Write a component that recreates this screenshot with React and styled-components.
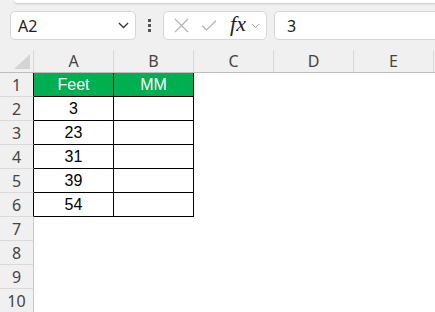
import React from 'react'
import styled, { createGlobalStyle } from 'styled-components'

const GlobalStyle = createGlobalStyle`
  body {
    margin: 0;
    background: #f0f0f0;
    font-family: "Noto Sans", "Liberation Sans", sans-serif;
    overflow: hidden;
  }
`

const Page = styled.div`
  width: 435px;
  height: 312px;
  overflow: hidden;
`

const RibbonEdge = styled.div`
  height: 3px;
  margin-left: 14px;
  background: #fff;
  border-bottom-left-radius: 6px;
  box-shadow: 0 1px 2px rgba(0, 0, 0, 0.18);
`

const Toolbar = styled.div`
  display: flex;
  align-items: flex-start;
  height: 47px;
  box-sizing: border-box;
  padding: 8px 0 0 10px;
`

const Box = styled.div`
  height: 29px;
  box-sizing: border-box;
  background: #fff;
  border: 1px solid #d6d6d6;
  border-radius: 5px;
  display: flex;
  align-items: center;
  flex: none;
`

const NameBox = styled(Box)`
  width: 126px;
  padding: 0 6px 0 7px;
  justify-content: space-between;
  font-size: 16px;
  color: #222;
`

const Dots = styled.div`
  width: 27px;
  height: 29px;
  display: flex;
  flex-direction: column;
  align-items: center;
  justify-content: center;
  gap: 2px;
  flex: none;

  span {
    width: 3px;
    height: 3px;
    background: #555;
  }
`

const FxBox = styled(Box)`
  width: 104px;
  padding: 0 0 0 6px;
`

const IconSlot = styled.div`
  width: ${p => p.$w}px;
  display: flex;
  align-items: center;
  justify-content: center;
  flex: none;
`

const Fx = styled.span`
  font-family: "Liberation Serif", "Times New Roman", serif;
  font-style: italic;
  font-size: 22px;
  color: #222;
  line-height: 1;
  padding-bottom: 3px;
`

const FormulaInput = styled(Box)`
  flex: 1;
  margin-left: 7px;
  margin-right: -10px;
  padding-left: 12px;
  font-size: 16px;
  color: #222;
`

const Sheet = styled.div`
  background: #fff;
`

const Row = styled.div`
  display: flex;
  height: ${p => p.$h}px;
`

const HeaderRow = styled(Row)`
  background: #f0f0f0;
  border-bottom: 1px solid #bdbdbd;
  box-sizing: border-box;
`

const Corner = styled.div`
  width: 34px;
  flex: none;
  box-sizing: border-box;
  border-right: 1px solid #d8d8d8;
  display: flex;
  align-items: flex-end;
  justify-content: flex-end;
  padding: 0 3px 3px 0;
`

const ColHead = styled.div`
  width: 80px;
  flex: none;
  box-sizing: border-box;
  border-right: 1px solid #d8d8d8;
  display: flex;
  align-items: center;
  justify-content: center;
  font-size: 16px;
  color: #444;
`

const RowHead = styled.div`
  width: 34px;
  flex: none;
  box-sizing: border-box;
  background: #f0f0f0;
  border-right: 1px solid ${p => (p.$edge ? '#000' : '#c8c8c8')};
  border-bottom: 1px solid #dadada;
  display: flex;
  align-items: center;
  justify-content: center;
  font-size: 16px;
  color: #444;
`

const Cell = styled.div`
  width: 80px;
  flex: none;
  box-sizing: border-box;
  display: flex;
  align-items: center;
  justify-content: center;
  font-family: "Liberation Sans", Arial, sans-serif;
  font-size: 16px;
  background: ${p => (p.$head ? '#00b050' : '#fff')};
  color: ${p => (p.$head ? '#fff' : '#000')};
  border-right: 1px solid ${p => (p.$boxed ? '#000' : 'transparent')};
  border-bottom: 1px solid ${p => (p.$boxed ? '#000' : 'transparent')};
`

const Chevron = ({ color = '#333', w = 11 }) => (
  <svg width={w} height={w / 2 + 1} viewBox="0 0 12 7">
    <path d="M1 1l5 5 5-5" fill="none" stroke={color} strokeWidth="1.3" />
  </svg>
)

const cols = ['A', 'B', 'C', 'D', 'E']
const data = [
  ['Feet', 'MM'],
  ['3', ''],
  ['23', ''],
  ['31', ''],
  ['39', ''],
  ['54', ''],
]

export default function App() {
  const rows = Array.from({ length: 10 }, (_, i) => i + 1)
  return (
    <Page>
      <GlobalStyle />
      <RibbonEdge />
      <Toolbar>
        <NameBox>
          <span>A2</span>
          <Chevron />
        </NameBox>
        <Dots>
          <span />
          <span />
          <span />
        </Dots>
        <FxBox>
          <IconSlot $w={22}>
            <svg width="15" height="15" viewBox="0 0 15 15">
              <path d="M1 1l13 13M14 1L1 14" stroke="#b4b4b4" strokeWidth="1.2" fill="none" />
            </svg>
          </IconSlot>
          <IconSlot $w={34}>
            <svg width="16" height="11" viewBox="0 0 16 11">
              <path d="M1 5.5l4.5 4.5L15 0.8" stroke="#b4b4b4" strokeWidth="1.2" fill="none" />
            </svg>
          </IconSlot>
          <IconSlot $w={24}>
            <Fx>fx</Fx>
          </IconSlot>
          <IconSlot $w={10}>
            <Chevron color="#999" w={9} />
          </IconSlot>
        </FxBox>
        <FormulaInput>3</FormulaInput>
      </Toolbar>
      <Sheet>
        <HeaderRow $h={23}>
          <Corner>
            <svg width="16" height="15" viewBox="0 0 16 15">
              <path d="M16 0V15H0Z" fill="#d4d4d4" />
            </svg>
          </Corner>
          {cols.map(c => (
            <ColHead key={c}>{c}</ColHead>
          ))}
          <ColHead />
        </HeaderRow>
        {rows.map(r => {
          const vals = data[r - 1]
          return (
            <Row key={r} $h={24}>
              <RowHead $edge={!!vals}>{r}</RowHead>
              {vals ? (
                <>
                  <Cell $boxed $head={r === 1}>{vals[0]}</Cell>
                  <Cell $boxed $head={r === 1}>{vals[1]}</Cell>
                </>
              ) : (
                <>
                  <Cell />
                  <Cell />
                </>
              )}
              <Cell />
              <Cell />
              <Cell />
            </Row>
          )
        })}
      </Sheet>
    </Page>
  )
}
